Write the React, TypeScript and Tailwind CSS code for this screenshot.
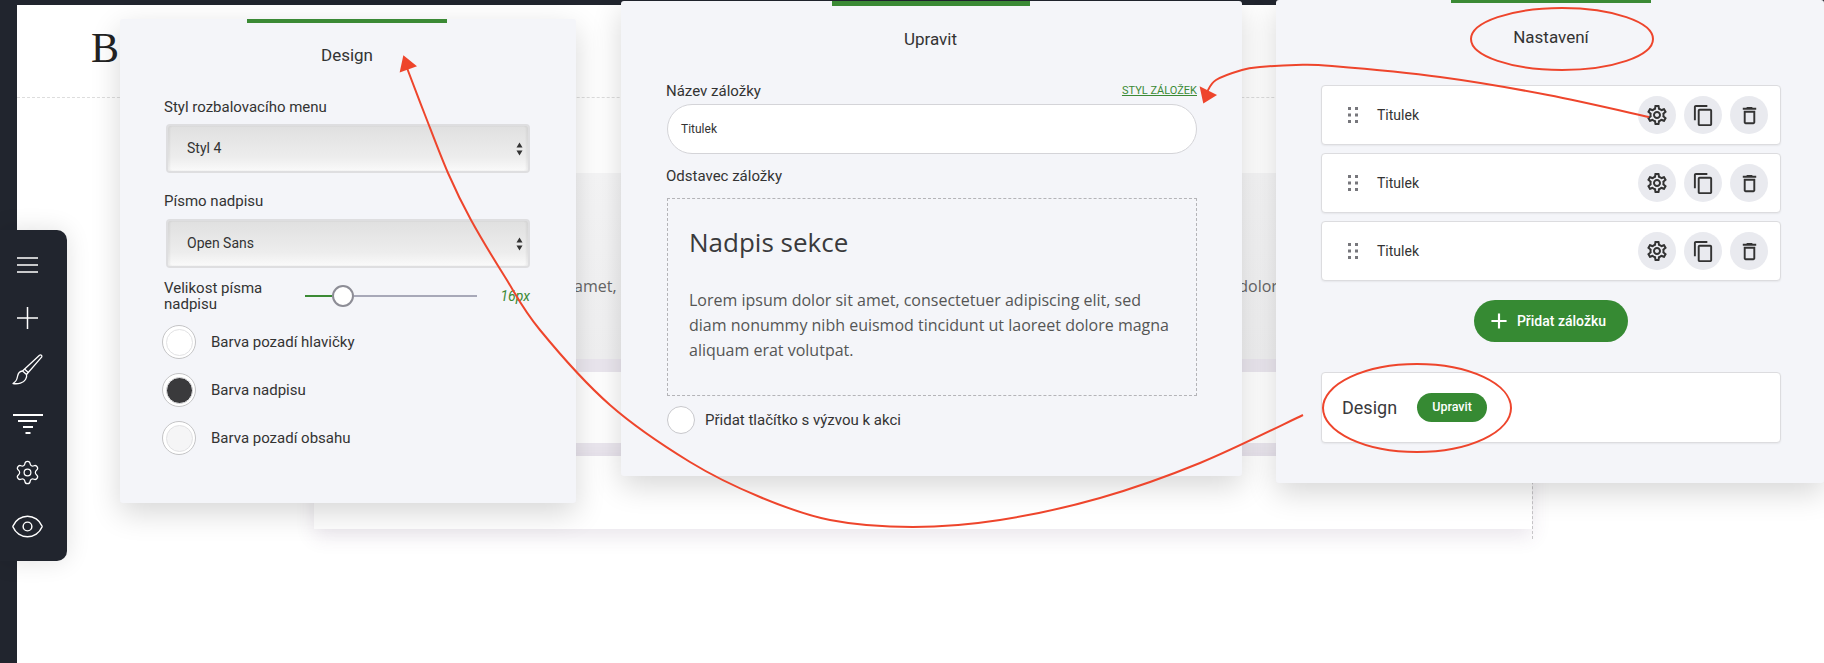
import React from 'react';
import { Eye, Settings } from 'lucide-react';
import { MdContentCopy, MdOutlineDelete, MdOutlineSettings, MdAdd } from 'react-icons/md';

const sans = "font-['Roboto','Liberation_Sans',sans-serif]";

const SelectBox = ({ value }: { value: string }) => (
  <div className="flex h-[49px] w-[364px] items-center justify-between rounded-[4px] border-2 border-[#dedee0] bg-gradient-to-b from-[#e0e0e0] via-[#ededed] via-70% to-[#fafafa] pl-[19px] pr-[5px] text-[14px] text-[#333] shadow-[inset_2px_0_2px_rgba(0,0,0,0.05),inset_-2px_0_2px_rgba(0,0,0,0.05)]">
    <span>{value}</span>
    <svg width="7" height="14" viewBox="0 0 7 14" fill="#333">
      <path d="M3.5 0.5 6.5 5.5H0.5Z M3.5 13.5 6.5 8.5H0.5Z" />
    </svg>
  </div>
);

const ColorRow = ({ label, color }: { label: string; color: string }) => (
  <div className="-ml-[2px] flex items-center gap-[15px]">
    <div className="flex h-[34px] w-[34px] items-center justify-center rounded-full border border-[#c4c4c6] bg-white">
      <div className={`h-[27px] w-[27px] rounded-full border border-[#e2e2e4] ${color}`} />
    </div>
    <span className="text-[15px] text-[#333]">{label}</span>
  </div>
);

const DesignPanel = () => (
  <div className={`absolute left-[120px] top-[19px] h-[484px] w-[456px] rounded-[3px] bg-[#f4f5f9] shadow-[0_10px_30px_rgba(0,0,0,0.16)] ${sans}`}>
    <div className="ml-[127px] h-[4px] w-[200px] bg-[#3b8a35]" />
    <div className="mr-[2px] mt-[22px] text-center text-[17px] leading-[20px] text-[#333]">Design</div>
    <div className="mt-[33px] flex flex-col px-[44px]">
      <div className="text-[15px] leading-[18px] text-[#333]">Styl rozbalovacího menu</div>
      <div className="ml-[2px] mt-[8px]"><SelectBox value="Styl 4" /></div>
      <div className="mt-[19px] text-[15px] leading-[18px] text-[#333]">Písmo nadpisu</div>
      <div className="ml-[2px] mt-[9px]"><SelectBox value="Open Sans" /></div>
      <div className="mt-[12px] flex items-center">
        <div className="w-[141px] text-[15px] leading-[16px] text-[#333]">Velikost písma nadpisu</div>
        <div className="flex w-[172px] items-center">
          <div className="h-[2px] w-[27px] bg-[#3b8a35]" />
          <div className="h-[22px] w-[22px] rounded-full border-2 border-[#8d8d96] bg-white" />
          <div className="h-[2px] flex-1 bg-[#a7a8b8]" />
        </div>
        <div className="flex-1 pr-[2px] text-right text-[14px] italic text-[#3b8a35]">16px</div>
      </div>
      <div className="mt-[13px] flex flex-col gap-[14px]">
        <ColorRow label="Barva pozadí hlavičky" color="bg-white" />
        <ColorRow label="Barva nadpisu" color="bg-[#3a3a3c]" />
        <ColorRow label="Barva pozadí obsahu" color="bg-[#f5f5f6]" />
      </div>
    </div>
  </div>
);

const EditPanel = () => (
  <div className={`absolute left-[621px] top-[1px] h-[475px] w-[621px] rounded-[3px] bg-[#f4f5f9] shadow-[0_10px_30px_rgba(0,0,0,0.16)] ${sans}`}>
    <div className="ml-[211px] h-[5px] w-[198px] bg-[#3b8a35]" />
    <div className="mr-[2px] mt-[23px] text-center text-[17px] leading-[20px] text-[#333]">Upravit</div>
    <div className="ml-[46px] mr-[45px] mt-[33px]">
      <div className="flex items-center justify-between">
        <span className="-ml-[1px] text-[15px] leading-[18px] text-[#333]">Název záložky</span>
        <span className="text-[11px] leading-[14px] text-[#3b8a35] underline">STYL ZÁLOŽEK</span>
      </div>
      <div className="mt-[4px] flex h-[50px] items-center rounded-full border border-[#d4d4d8] bg-white pl-[13px] text-[12px] text-[#333]">Titulek</div>
      <div className="-ml-[1px] mt-[13px] text-[15px] leading-[18px] text-[#333]">Odstavec záložky</div>
      <div className="mt-[13px] h-[198px] border border-dashed border-[#b4b4b8] pl-[21px] pr-[22px] pt-[25px] font-['Open_Sans',sans-serif] text-[#3a3a3c]">
        <div className="text-[26px] leading-[36px]">Nadpis sekce</div>
        <p className="mt-[28px] text-[16px] leading-[25px] text-[#555]">
          Lorem ipsum dolor sit amet, consectetuer adipiscing elit, sed diam nonummy nibh euismod tincidunt ut laoreet dolore magna aliquam erat volutpat.
        </p>
      </div>
      <div className="mt-[10px] flex items-center gap-[10px]">
        <div className="h-[28px] w-[28px] rounded-full border border-[#c8c8cc] bg-white" />
        <span className="text-[15px] text-[#333]">Přidat tlačítko s výzvou k akci</span>
      </div>
    </div>
  </div>
);

const GripIcon = () => (
  <svg width="10" height="16" viewBox="0 0 10 16" fill="#77777c">
    <rect x="0" y="0" width="3" height="3" />
    <rect x="7" y="0" width="3" height="3" />
    <rect x="0" y="6.5" width="3" height="3" />
    <rect x="7" y="6.5" width="3" height="3" />
    <rect x="0" y="13" width="3" height="3" />
    <rect x="7" y="13" width="3" height="3" />
  </svg>
);

const IconButton = ({ children }: { children: React.ReactNode }) => (
  <div className="flex h-[38px] w-[38px] items-center justify-center rounded-full bg-[#e9eaef] text-[#333]">{children}</div>
);

const TabRow = () => (
  <div className="flex h-[60px] items-center rounded-[4px] border border-[#dcdcdf] bg-white pl-[26px] pr-[12px] shadow-[0_1px_2px_rgba(0,0,0,0.06)]">
    <GripIcon />
    <span className="ml-[19px] flex-1 text-[14px] text-[#333]">Titulek</span>
    <div className="flex gap-[8px]">
      <IconButton><MdOutlineSettings size={24} /></IconButton>
      <IconButton><MdContentCopy size={23} /></IconButton>
      <IconButton><MdOutlineDelete size={23} /></IconButton>
    </div>
  </div>
);

const SettingsPanel = () => (
  <div className={`absolute left-[1276px] top-0 h-[483px] w-[548px] rounded-[3px] bg-[#f4f5f9] shadow-[0_10px_30px_rgba(0,0,0,0.16)] ${sans}`}>
    <div className="ml-[175px] h-[3px] w-[200px] bg-[#3b8a35]" />
    <div className="ml-[175px] mt-[24px] w-[200px] text-center text-[17px] leading-[20px] text-[#333]">Nastavení</div>
    <div className="ml-[45px] mt-[38px] flex w-[460px] flex-col">
      <div className="flex flex-col gap-[8px]">
        <TabRow />
        <TabRow />
        <TabRow />
      </div>
      <div className="mt-[19px] flex justify-center">
        <div className="flex h-[42px] w-[154px] items-center justify-center gap-[5px] rounded-full bg-[#368a33] pr-[10px] text-[14px] font-medium text-white">
          <MdAdd size={26} />
          <span>Přidat záložku</span>
        </div>
      </div>
      <div className="mt-[30px] flex h-[71px] items-center rounded-[4px] border border-[#dcdcdf] bg-white pl-[20px] shadow-[0_1px_2px_rgba(0,0,0,0.06)]">
        <span className="text-[18px] text-[#3a3a3c]">Design</span>
        <span className="ml-[20px] flex h-[29px] w-[70px] items-center justify-center rounded-full bg-[#368a33] text-[12.5px] font-medium text-white">Upravit</span>
      </div>
    </div>
  </div>
);

const Sidebar = () => (
  <div className="absolute left-0 top-[230px] flex h-[331px] w-[67px] flex-col items-center rounded-r-[10px] bg-[#21252e] pt-[26px] text-white shadow-[0_0_24px_rgba(0,0,0,0.12)]">
    <svg className="mr-[12px]" width="21" height="18" viewBox="0 0 21 18" stroke="currentColor" strokeWidth="1.5">
      <path d="M0 2H21M0 9H21M0 16H21" />
    </svg>
    <svg className="mr-[12px] mt-[33px]" width="21" height="22" viewBox="0 0 21 22" stroke="currentColor" strokeWidth="1.5">
      <path d="M0 11H21M10.5 0V22" />
    </svg>
    <svg className="mr-[12px] mt-[25px]" width="31" height="31" viewBox="0 0 31 31" fill="none" stroke="currentColor" strokeWidth="1.3" strokeLinejoin="round">
      <path d="M27.5 1.2C28.9 0.3 30.4 1.6 29.6 3.1L14.5 20.5L10.5 17Z" />
      <path d="M10.5 17C7.5 17.2 6 19.5 5.5 22.5C5 25.5 3.5 28 1 29.5C6 30.3 11.5 29 13.5 25.5C14.6 23.5 15 22 14.5 20.5" />
      <path d="M12.5 15L16.3 18.5" />
    </svg>
    <svg className="mr-[12px] mt-[29px]" width="30" height="20" viewBox="0 0 30 20" stroke="currentColor" strokeWidth="2">
      <path d="M0 1H30M5 7H24M10 13H20M12.5 19H17.5" />
    </svg>
    <Settings className="mr-[12px] mt-[25px]" size={27} strokeWidth={1.1} />
    <Eye className="mr-[12px] mt-[23px]" size={35} strokeWidth={1} />
  </div>
);

// hladka krivka pres body (catmull-rom)
const smooth = (pts: number[][]) => {
  let d = `M${pts[0][0]} ${pts[0][1]}`;
  for (let i = 0; i < pts.length - 1; i++) {
    const p0 = pts[i - 1] || pts[i];
    const p1 = pts[i];
    const p2 = pts[i + 1];
    const p3 = pts[i + 2] || p2;
    d += `C${p1[0] + (p2[0] - p0[0]) / 6} ${p1[1] + (p2[1] - p0[1]) / 6} ${p2[0] - (p3[0] - p1[0]) / 6} ${p2[1] - (p3[1] - p1[1]) / 6} ${p2[0]} ${p2[1]}`;
  }
  return d;
};

const gearArrow = [[1649, 117], [1548, 95], [1440, 77], [1332, 66], [1296, 65], [1260, 67], [1242, 70], [1216, 80], [1207, 92]];
const designArrow = [[1303, 415], [1200, 463], [1100, 498], [1000, 520], [913, 527], [830, 520], [760, 497], [690, 462], [610, 405], [540, 330], [505, 277], [471, 220], [448, 173], [425, 115], [407, 68]];

const Annotations = () => (
  <svg className="pointer-events-none absolute inset-0" width="1824" height="663" viewBox="0 0 1824 663" fill="none" stroke="#ee452c" strokeWidth="2">
    <path d={smooth(gearArrow)} />
    <path d="M1204 102L1201 88L1215 95Z" fill="#ee452c" />
    <path d={smooth(designArrow)} />
    <path d="M404 57L401 71L415 66Z" fill="#ee452c" />
    <ellipse cx="1562" cy="39" rx="91" ry="31" />
    <ellipse cx="1417" cy="408" rx="94" ry="44" />
  </svg>
);

export default function App() {
  return (
    <div className="relative h-[663px] w-[1824px] overflow-hidden bg-white">
      {/* stranka pod panely */}
      <div className="flex h-full flex-col">
        <div className="h-[5px] bg-[#21252e]" />
        <div className="flex flex-1">
          <div className="w-[17px] bg-[#21252e]" />
          <div className="flex-1">
            <div className="h-[93px] border-b border-dashed border-[#dddddd] pl-[74px] pt-[18px] font-['Liberation_Serif',serif] text-[42px] leading-[50px] text-[#222]">B.</div>
            <div className="ml-[297px] mt-[75px] w-[1219px] border-r border-dashed border-[#cccccc]">
              <div className="h-[186px] overflow-hidden whitespace-nowrap bg-gradient-to-b from-[#f6f6f7] to-[#f1f1f2] pl-[92px] pt-[101px] font-['Open_Sans',sans-serif] text-[16px] text-[#666]">
                Lorem ipsum dolor sit amet, consectetuer adipiscing elit, sed diam nonummy nibh euismod tincidunt ut laoreet dolore magna
              </div>
              <div className="h-[13px] bg-[#ebe7ef]" />
              <div className="h-[71px] bg-white" />
              <div className="h-[13px] bg-[#ebe7ef]" />
              <div className="h-[73px] bg-white shadow-[0_8px_18px_rgba(90,60,110,0.12)]" />
              <div className="h-[10px]" />
            </div>
          </div>
        </div>
      </div>
      <Sidebar />
      <DesignPanel />
      <EditPanel />
      <SettingsPanel />
      <Annotations />
    </div>
  );
}
